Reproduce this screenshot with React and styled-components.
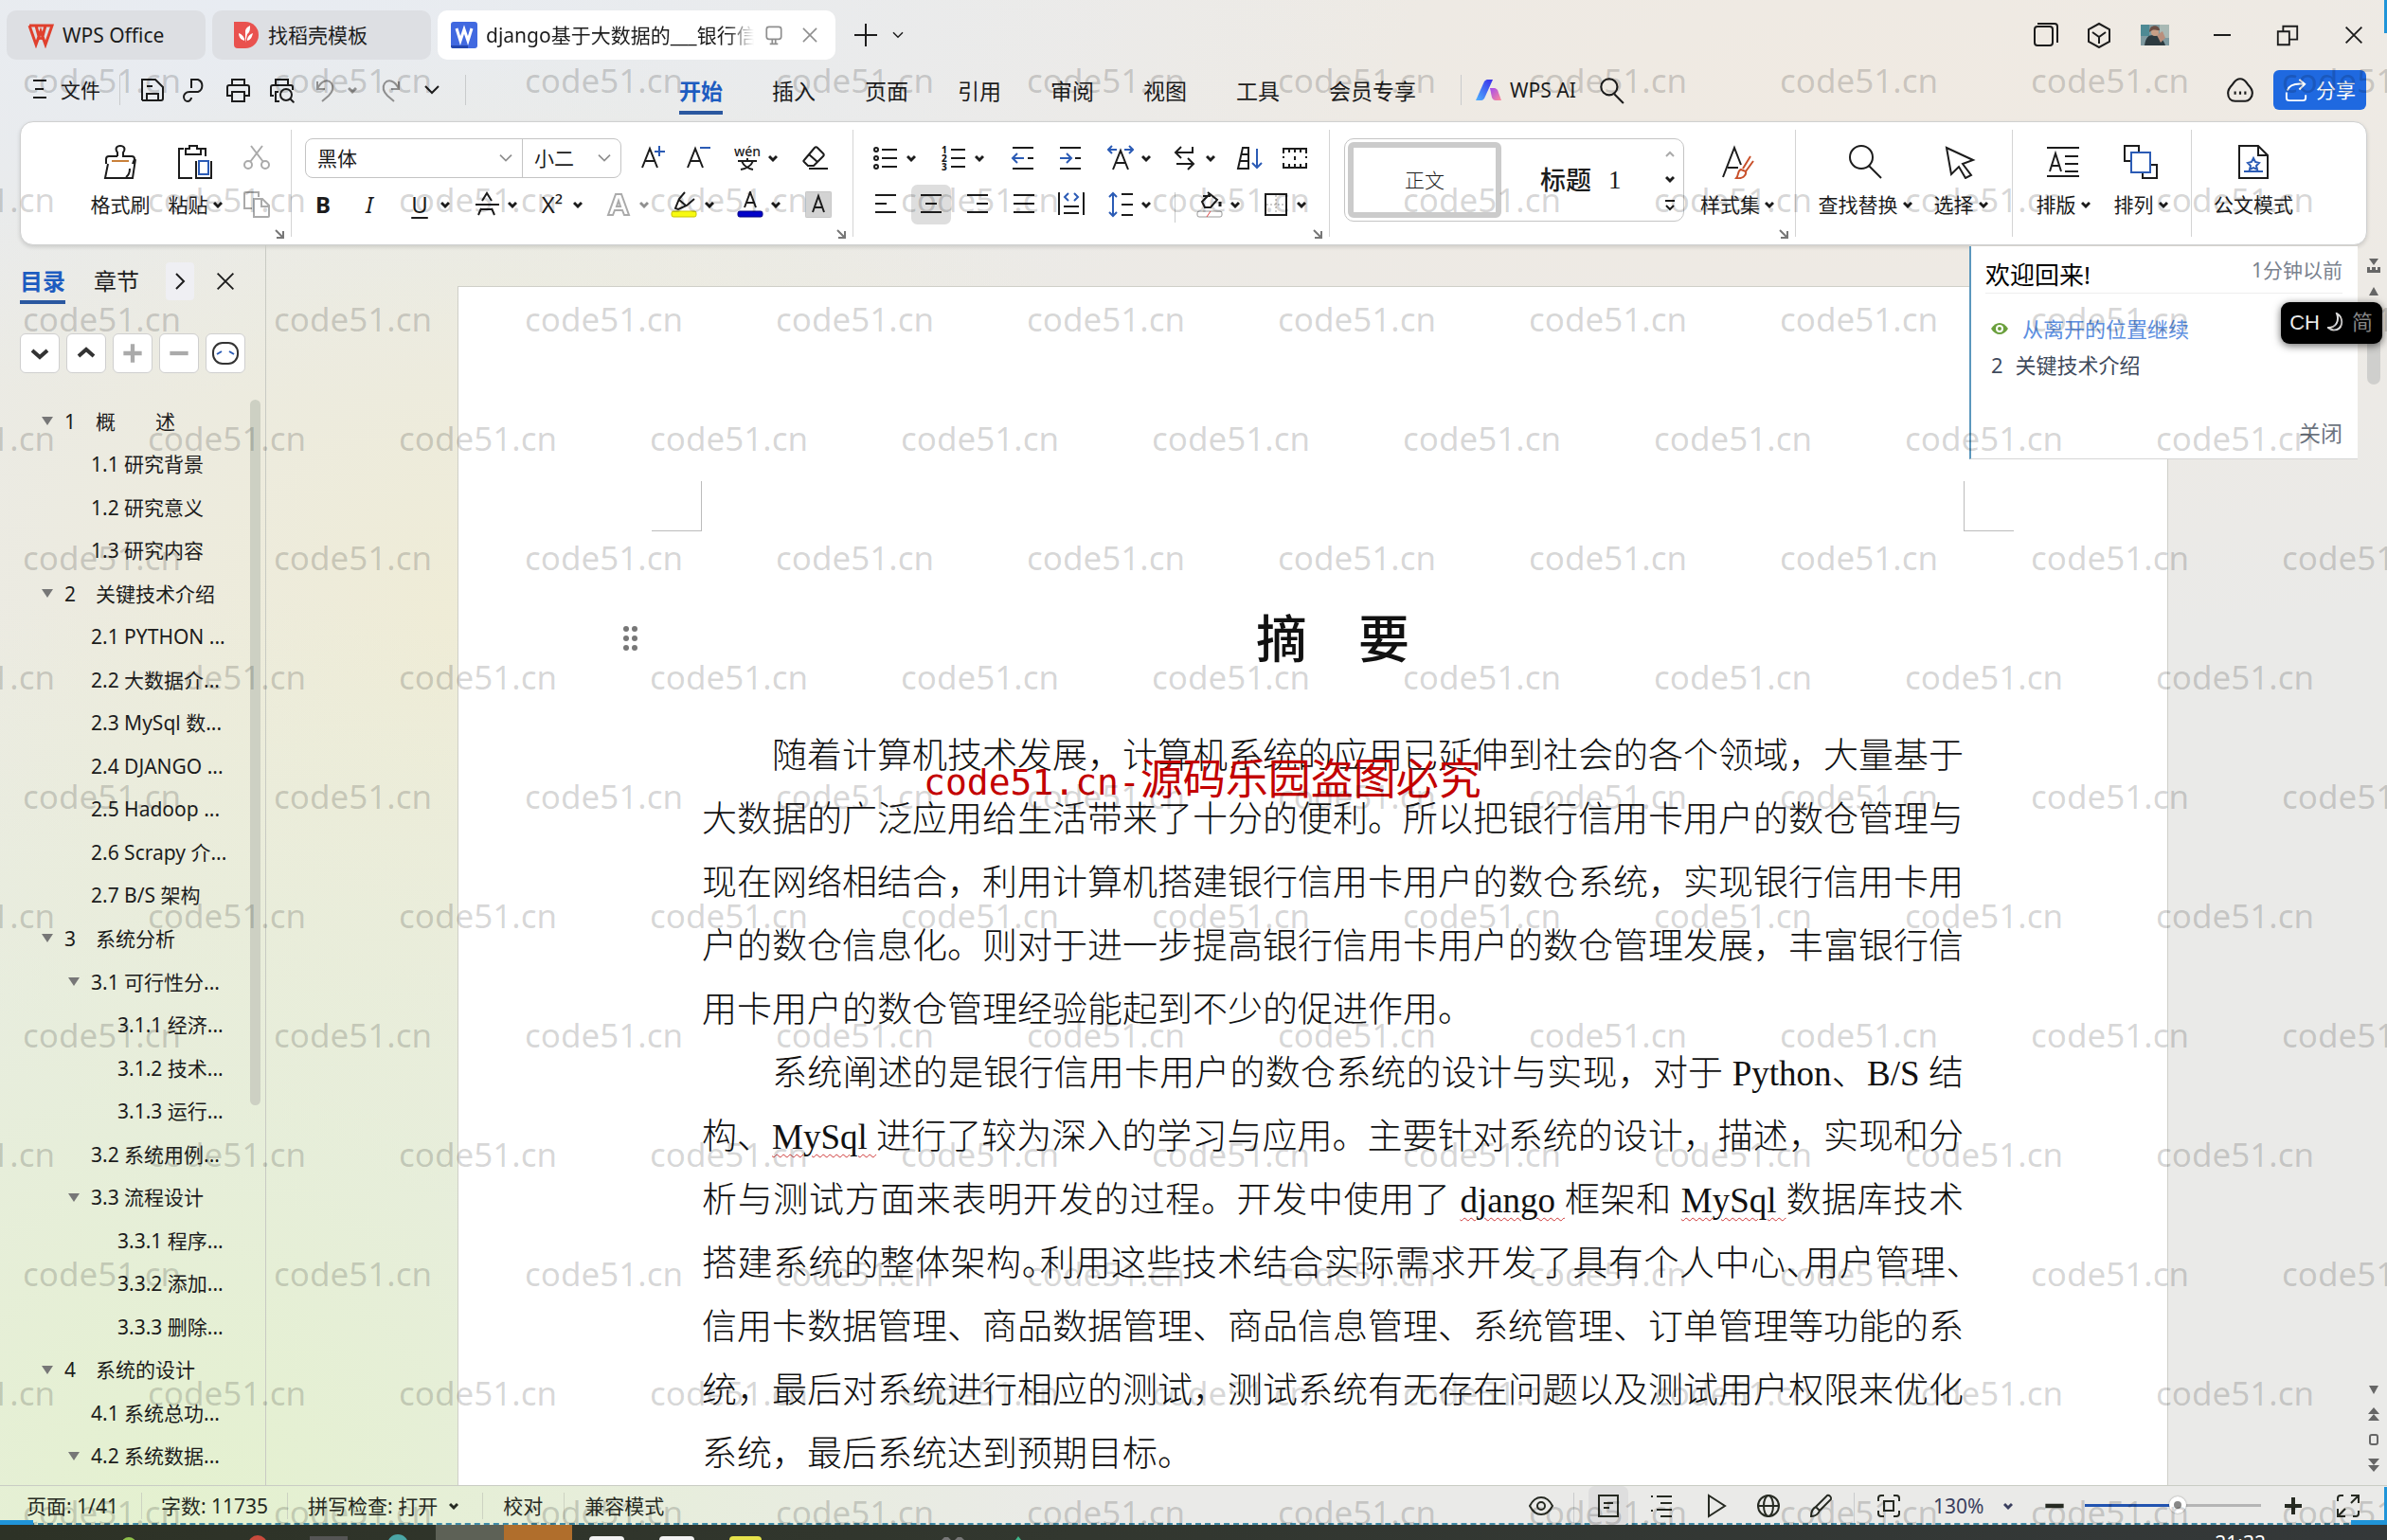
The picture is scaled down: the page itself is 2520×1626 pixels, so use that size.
import React, { useState } from 'react';
import styled, { createGlobalStyle } from 'styled-components';

const BLUE = '#2b5bb5';

const icons = {
  menu: <path d="M7 4h14M9 13h9M7 22h14" />,
  save: <path d="M3 25V3h14l8 8v12a2 2 0 0 1-2 2h-2M3 25h4M8 25v-7h12v7zM8 10h6" />,
  wpsP: <path d="M10 12V3h7a7 7 0 0 1 0 13h-9c-4 0-6 3-6 5 0 3 2 5 4 5s4-2 4-4" />,
  print: <path d="M8 9V3h13v6M8 20H3V11a2 2 0 0 1 2-2h19a2 2 0 0 1 2 2v9h-5M8 16h13v10H8z" />,
  preview: <><path d="M8 9V3h13v6M6 20H3V11a2 2 0 0 1 2-2h19a2 2 0 0 1 2 2v3M11 16H8v10h4" /><circle cx="19" cy="19" r="6" /><path d="M23 23l5 5" /></>,
  undo: <path d="M4 5v8h8M4 13C8 4 15 2 19 7c3 5 1 9-3 13l-7 6" />,
  redo: <path d="M24 5v8h-8M24 13C20 4 13 2 9 7c-3 5-1 9 3 13l7 6" />,
  down: <path d="M7 10l7 7 7-7" />,
  search: <><circle cx="12" cy="11" r="8" /><path d="M17 18l9 9" /></>,
  comment: <><path d="M14 3c5 0 6 4 8 6 3 3 4 5 4 8 0 5-4 8-7 8H9c-4 0-7-3-7-8 0-3 1-5 4-8 2-2 3-6 8-6z" /><path d="M8 17h2M13 17h2M18 17h2" strokeWidth="3" /></>,
  share: <path d="M3 16v6a3 3 0 0 0 3 3h15a3 3 0 0 0 3-3v-3M4 14c2-6 8-8 18-7M17 2l6 5-6 6" />,
  screen: <><rect x="5" y="4" width="18" height="15" rx="3" /><path d="M12 19v5M16 19v5M9 25h10" /></>,
  close: <path d="M5 5l18 18M23 5L5 23" />,
  plus: <path d="M14 2v24M2 14h24" />,
  minimize: <path d="M5 14h18" />,
  restore: <path d="M3 10h13v15H3zM9 10V4h16v15h-9" />,
  book: <><rect x="2" y="5" width="19" height="20" rx="3" /><path d="M5 2h18a3 3 0 0 1 3 3v17" /></>,
  cube: <path d="M14 2l11 6v13l-11 6-11-6V8zM7 11l7 5 7-5M14 16v7" />,
  scissors: <g stroke="#aaa"><circle cx="5" cy="21" r="4" /><circle cx="23" cy="21" r="4" /><path d="M7 18L20 1M21 18L8 1" /></g>,
  copy: <g stroke="#aaa"><path d="M9 18H1V1h15v5M11 8h9l7 7v12H11zM19 9v7h7" /></g>,
  wen: <><text x="0" y="12" fontSize="14" fontWeight="500" fill="currentColor" stroke="none">wén</text><path d="M4 17h20M14 14v3M8 17c2 5 7 8 12 9M20 17c-2 5-7 8-13 9" /></>,
  eraser: <path d="M3 16L14 3c1-1 2-1 3 0l6 6c1 1 1 2 0 3L13 22H7l-4-4c-1-1-1-1 0-2zM8 10l9 8M8 25h20" />,
  bullets: <><circle cx="4" cy="5" r="2" /><circle cx="4" cy="14" r="2" /><circle cx="4" cy="23" r="2" /><path d="M10 5h16M10 14h16M10 23h16" /></>,
  numbers: <><text x="1" y="9" fontSize="10" fontWeight="800" fill="currentColor" stroke="none">1</text><text x="1" y="18" fontSize="10" fontWeight="800" fill="currentColor" stroke="none">2</text><text x="1" y="27" fontSize="10" fontWeight="800" fill="currentColor" stroke="none">3</text><path d="M11 5h15M11 14h15M11 23h15" /></>,
  outdent: <><path d="M3 3h22M3 25h22M19 14h6" /><path d="M3 14h12M8 9l-5 5 5 5" stroke={BLUE} /></>,
  indent: <><path d="M3 3h22M3 25h22M19 14h6" /><path d="M3 14h12M10 9l5 5-5 5" stroke={BLUE} /></>,
  spacing: <><path d="M6 26l8-20 8 20M9 19h10" /><path d="M1 5h9M5 1L1 5l4 4M18 5h9M23 1l4 4-4 4" stroke={BLUE} /></>,
  wrap: <path d="M22 2v6H4M10 2L4 8l6 6M5 20h18M17 14l6 6-6 6" />,
  sort: <><path d="M2 25L7 3h6v22zM6 10h7M4 17h9" /><path d="M22 4v20M17 19l5 5 5-5" stroke={BLUE} /></>,
  tableLines: <path d="M2 9V4h24v5M8 4v4M14 4v4M20 4v4M2 19v5h24v-5M8 24v-4M14 24v-4M20 24v-4M14 12v4M2 12v2M26 12v2" />,
  left: <path d="M3 4h22M3 13h12M3 22h22" />,
  center: <path d="M3 4h22M8 13h12M3 22h22" />,
  right: <path d="M3 4h22M13 13h12M3 22h22" />,
  justify: <path d="M3 4h22M3 13h22M3 22h22" />,
  distribute: <><path d="M1 1v24M27 1v24M6 16h16M6 23h16" /><path d="M11 2L7 6l4 4M17 2l4 4-4 4" stroke={BLUE} /></>,
  lineHeight: <><path d="M15 3h12M15 14h12M15 25h12" /><path d="M6 2v24M2 6l4-4 4 4M2 22l4 4 4-4" stroke={BLUE} /></>,
  fill: <><path d="M12 1l10 8-7 8H9l-3-6 8-8M7 5h8" /><path d="M25 11v5" strokeWidth="3" /><rect x="1" y="21" width="26" height="6" rx="2" stroke="#999" strokeWidth="1" /><path d="M11 27l4-6" stroke="#d44" strokeWidth="1" /></>,
  border: <><rect x="3" y="3" width="22" height="22" /><path d="M14 4v20M4 14h20" stroke="#999" strokeWidth="1" strokeDasharray="2 2" /></>,
  highlight: <><path d="M15 1L9 8l-4 10 3 1 9-4 8-7M9 9l7 6" /><rect x="1" y="21" width="26" height="6" rx="2" fill="#f7fa10" stroke="#c9c500" strokeWidth="1" /></>,
  fontColor: <><path d="M8 17l6-16 6 16M10 12h8" /><rect x="1" y="21" width="26" height="6" rx="2" fill="#0303c9" stroke="#020280" strokeWidth="1" /></>,
  shadeA: <><rect x="0" y="0" width="28" height="28" fill="#d3d3d3" stroke="#bbb" strokeWidth="1" /><path d="M8 22l6-17 6 17M10 17h8" /></>,
  outlineA: <path d="M3 25L11 3h6l8 22h-5l-2-5h-8l-2 5zM12 16h4l-2-6z" stroke="#aaa" />,
  strikeA: <path d="M9 10l5-8 5 8M2 14h25M8 18l-3 7M19 18l3 7M8 19h12" />,
  eye: <><path d="M2 14c3-6 7-9 12-9s9 3 12 9c-3 6-7 9-12 9S5 20 2 14z" /><circle cx="14" cy="14" r="4" /></>,
  doc: <path d="M4 3h20v22H4zM9 11h10M9 16h6" />,
  outline: <path d="M3 4h2M3 19h2M9 4h16M13 11h12M9 18h16M13 25h12" />,
  play: <path d="M6 3l17 11L6 25z" />,
  globe: <><circle cx="14" cy="14" r="11" /><ellipse cx="14" cy="14" rx="5" ry="11" /><path d="M3 14h22" /></>,
  pen: <path d="M4 25c0-5 1-8 5-10l4 4c-2 5-5 6-9 6zM9 15L21 3c2-1 5 2 4 4L13 19" />,
  fit: <><path d="M3 9V6a3 3 0 0 1 3-3h3M19 3h3a3 3 0 0 1 3 3v3M25 19v3a3 3 0 0 1-3 3h-3M9 25H6a3 3 0 0 1-3-3v-3" /><rect x="9" y="9" width="10" height="10" /></>,
  expand: <path d="M3 9V6a3 3 0 0 1 3-3h3M25 19v3a3 3 0 0 1-3 3h-3M17 3h8v8M25 3l-8 8M3 17v8h8M3 25l8-8" />,
  bold: <path d="M5 14h18" strokeWidth="4" />,
  boldPlus: <path d="M14 5v18M5 14h18" strokeWidth="4" />,
};

const big = {
  brush: <><path d="M15 12V8c-3-4-1-7 3-7s6 3 3 7v4h9c2 0 3 1 3 3l-2 5M15 12H6c-2 0-3 1-3 3v5M5 20L2 35h29l3-20M24 34c3-2 4-5 4-9" /><path d="M9 17h18" stroke="#c9803a" /></>,
  paste: <><path d="M6 4H1v31h14M25 4h4v8M8 4h4V1h8v3h4v6H8zM19 17v18h16V17" /><path d="M22 17h10v14H22z" stroke={BLUE} /></>,
  styles: <><path d="M3 34L15 3l7 18M8 24h11" /><path d="M32 12L24 25M35 17l-8 11M22 26c-4 1-2 6-5 9 6 1 11-2 10-7z" stroke="#c8502a" /></>,
  find: <><circle cx="14" cy="13" r="12" /><path d="M22 22l13 13" /></>,
  cursor: <path d="M3 3l28 13-11 4 9 12-6 3-7-12-8 8z" />,
  typeset: <path d="M1 3h34M1 33h34M4 28l6-19 6 19M6 22h8M20 12h14M20 20h14M20 28h14" />,
  arrange: <><path d="M9 17H1V1h15v7M27 21h8v14H20v-6" /><path d="M8 8h20v21H8z" stroke={BLUE} /></>,
  official: <><path d="M3 1h20l10 10v24H3zM23 2v9h9" /><path d="M8 28h20M18 14l2 4 4 1-3 3 1 4-4-2-4 2 1-4-3-3 4-1z" stroke={BLUE} /></>,
};

const Icon = ({ name, size = 28 }) => (
  <Svg width={size} height={size} viewBox="0 0 28 28">{icons[name]}</Svg>
);

const BigIcon = ({ name }) => (
  <Svg width="36" height="36" viewBox="0 0 36 36">{big[name]}</Svg>
);

const Chevron = ({ light }) => (
  <Svg width="10" height="10" viewBox="0 0 10 10" $light={light}>
    <path d="M1 3l4 4 4-4" strokeWidth={light ? 1 : 3} />
  </Svg>
);

const ToolButton = ({ name, w, drop, active, label, children }) => (
  <Tool type="button" $w={w} $active={active} aria-label={label || name}>
    {children || <Icon name={name} />}
    {drop && <Chevron />}
  </Tool>
);

const BigButton = ({ icon, label, w, drop }) => (
  <BigTool type="button" $w={w}>
    <BigIcon name={icon} />
    <BigLabel>{label}{drop && <Chevron />}</BigLabel>
  </BigTool>
);

const Launcher = () => (
  <LaunchButton type="button" aria-label="more settings">
    <Svg width="10" height="10" viewBox="0 0 10 10"><path d="M1 1l7 7M9 2v7H2" /></Svg>
  </LaunchButton>
);

const menus = ['开始', '插入', '页面', '引用', '审阅', '视图', '工具', '会员专享'];

const outline = [
  { level: 0, open: true, text: '1\u3000概\u3000\u3000述' },
  { level: 1, text: '1.1 研究背景' },
  { level: 1, text: '1.2 研究意义' },
  { level: 1, text: '1.3 研究内容' },
  { level: 0, open: true, text: '2\u3000关键技术介绍' },
  { level: 1, text: '2.1 PYTHON ...' },
  { level: 1, text: '2.2 大数据介...' },
  { level: 1, text: '2.3 MySql 数...' },
  { level: 1, text: '2.4 DJANGO ...' },
  { level: 1, text: '2.5 Hadoop ...' },
  { level: 1, text: '2.6 Scrapy 介...' },
  { level: 1, text: '2.7 B/S 架构' },
  { level: 0, open: true, text: '3\u3000系统分析' },
  { level: 1, open: true, text: '3.1 可行性分...' },
  { level: 2, text: '3.1.1 经济...' },
  { level: 2, text: '3.1.2 技术...' },
  { level: 2, text: '3.1.3 运行...' },
  { level: 1, text: '3.2 系统用例...' },
  { level: 1, open: true, text: '3.3 流程设计' },
  { level: 2, text: '3.3.1 程序...' },
  { level: 2, text: '3.3.2 添加...' },
  { level: 2, text: '3.3.3 删除...' },
  { level: 0, open: true, text: '4\u3000系统的设计' },
  { level: 1, text: '4.1 系统总功...' },
  { level: 1, open: true, text: '4.2 系统数据...' },
];

const WatermarkLayer = () => (
  <Watermark aria-hidden="true">
    {Array.from({ length: 13 }, (_, row) => (
      <WatermarkRow key={row} $shift={row % 2 === 1}>
        {Array.from({ length: 10 }, (_, i) => <span key={i}>code51.cn</span>)}
      </WatermarkRow>
    ))}
  </Watermark>
);

const TitleBar = () => (
  <TabBar>
    <Tab type="button" $w={210} $pad={22}>
      <Svg width="28" height="28" viewBox="0 0 28 28">
        <path d="M2 4h7l4 15M2 4l7 20 5-14 5 14 7-20h-7l-4 15M9 4h10" stroke="#e0402e" strokeWidth="3" />
      </Svg>
      WPS Office
    </Tab>
    <Tab type="button" $w={231} $pad={22}>
      <Svg width="28" height="28" viewBox="0 0 28 28">
        <path d="M1 0h12a14 14 0 0 1 0 28H5a4 4 0 0 1-4-4z" fill="#e9524f" stroke="none" />
        <path d="M13 22V10c0-3 3-5 5-6 0 4 0 7-3 9M12 20c-4-1-6-4-6-8 3 1 5 3 6 6M15 20c4-1 5-4 6-8-3 1-5 3-6 6" fill="#fff" stroke="none" />
      </Svg>
      找稻壳模板
    </Tab>
    <Tab type="button" $w={420} $pad={14} $active>
      <Svg width="28" height="28" viewBox="0 0 28 28">
        <rect width="28" height="28" rx="3" fill="#4169e0" stroke="none" />
        <path d="M0 25h18v3H2a2 2 0 0 1-2-2z" fill="#2347b0" stroke="none" />
        <path d="M6 7l4 13 4-12 4 12 4-13" stroke="#fff" strokeWidth="3" />
      </Svg>
      <TabTitle>django基于大数据的___银行信</TabTitle>
      <Muted $mr={6}><Icon name="screen" size={24} /></Muted>
      <Muted><Icon name="close" size={22} /></Muted>
    </Tab>
    <PlainButton type="button" aria-label="new tab" $ml={11}><Icon name="plus" /></PlainButton>
    <PlainButton type="button" aria-label="tab list" $ml={10}><Icon name="down" size={20} /></PlainButton>
    <Spacer />
    <WindowControls>
      <PlainButton type="button" aria-label="reading"><Icon name="book" /></PlainButton>
      <PlainButton type="button" aria-label="apps" $ml={28}><Icon name="cube" /></PlainButton>
      <Avatar viewBox="0 0 30 22">
        <rect width="30" height="22" fill="#7f9aa0" />
        <path d="M0 0h9v12H0z" fill="#4e8a94" />
        <path d="M20 0h10v14H20z" fill="#a9b9b4" />
        <path d="M4 22c1-8 4-11 9-11s11 4 13 11z" fill="#2d3b40" />
        <path d="M17 11l6-4 3 7-5 5z" fill="#b98f7c" />
        <circle cx="15" cy="8" r="4" fill="#c79f86" />
        <path d="M9 8c0-9 11-8 11-2-4 0-6-1-8 0z" fill="#6a4f44" />
      </Avatar>
      <PlainButton type="button" aria-label="minimize" $ml={42}><Icon name="minimize" /></PlainButton>
      <PlainButton type="button" aria-label="restore" $ml={42}><Icon name="restore" size={26} /></PlainButton>
      <PlainButton type="button" aria-label="close" $ml={44}><Icon name="close" size={26} /></PlainButton>
    </WindowControls>
  </TabBar>
);

const MenuRow = () => {
  const [current, setCurrent] = useState('开始');
  return (
    <MenuBar>
      <QuickTools>
        <PlainButton type="button"><Icon name="menu" />文件</PlainButton>
        <MenuRule $l={20} $r={20} />
        <ToolButton name="save" w={45} />
        <ToolButton name="wpsP" w={45} />
        <ToolButton name="print" w={46} />
        <ToolButton name="preview" w={48} />
        <Muted><ToolButton name="undo" w={66} drop /></Muted>
        <Muted><ToolButton name="redo" w={45} /></Muted>
        <ToolButton name="down" w={49} />
        <MenuRule $l={0} $r={0} />
      </QuickTools>
      <MenuTabs>
        {menus.map((name) => (
          <MenuTab type="button" key={name} $active={name === current} onClick={() => setCurrent(name)}>
            {name}
          </MenuTab>
        ))}
      </MenuTabs>
      <MenuRule $l={0} $r={15} />
      <PlainButton type="button">
        <svg width="28" height="22" viewBox="0 0 28 22">
          <defs>
            <linearGradient id="aiBlue" x1="0" y1="1" x2="1" y2="0">
              <stop offset="0" stopColor="#4db2ff" /><stop offset="1" stopColor="#3a2be8" />
            </linearGradient>
            <linearGradient id="aiPink" x1="0" y1="0" x2="1" y2="1">
              <stop offset="0" stopColor="#a24bf0" /><stop offset="1" stopColor="#ff8a98" />
            </linearGradient>
          </defs>
          <path d="M9 2c1-1 2-2 3-2h6L9 20c-1 1-2 2-3 2H0z" fill="url(#aiBlue)" />
          <path d="M15 9h5c1 0 2 1 3 2l4 11h-6c-2 0-3-1-4-3z" fill="url(#aiPink)" />
        </svg>
        WPS AI
      </PlainButton>
      <PlainButton type="button" aria-label="search" $ml={22}><Icon name="search" size={30} /></PlainButton>
      <Spacer />
      <PlainButton type="button" aria-label="comments"><Icon name="comment" size={30} /></PlainButton>
      <ShareButton type="button"><Icon name="share" size={27} />分享</ShareButton>
    </MenuBar>
  );
};

const RibbonBar = () => (
  <Ribbon>
    <Group $pl={64} $pr={22}>
      <Columns>
        <BigButton icon="brush" label="格式刷" w={82} />
        <BigButton icon="paste" label="粘贴" w={76} drop />
        <Stack $ml={13}>
          <Row><ToolButton name="scissors" w={28} /></Row>
          <Row><ToolButton name="copy" w={28} /></Row>
        </Stack>
      </Columns>
      <Launcher />
    </Group>
    <Group $pl={14} $pr={22}>
      <Stack>
        <Row>
          <Combo>
            <ComboPart $w={228}>
              <select aria-label="font" defaultValue="黑体"><option>黑体</option><option>宋体</option></select>
              <Muted><Icon name="down" size={24} /></Muted>
            </ComboPart>
            <ComboPart $w={104}>
              <select aria-label="font size" defaultValue="小二"><option>小二</option><option>小四</option></select>
              <Muted><Icon name="down" size={24} /></Muted>
            </ComboPart>
          </Combo>
          <ToolButton w={48} label="grow font">
            <Svg width="28" height="28" viewBox="0 0 28 28"><path d="M1 24L9 4l8 20M4 17h10" /><path d="M19 1v11M14 7h11" stroke={BLUE} /></Svg>
          </ToolButton>
          <ToolButton w={50} label="shrink font">
            <Svg width="28" height="28" viewBox="0 0 28 28"><path d="M1 24L9 4l8 20M4 17h10" /><path d="M14 3h11" stroke={BLUE} /></Svg>
          </ToolButton>
          <ToolButton name="wen" w={71} drop />
          <ToolButton name="eraser" w={28} />
        </Row>
        <Row $pl={5}>
          <ToolButton w={49} label="bold"><Letter $bold>B</Letter></ToolButton>
          <ToolButton w={53} label="italic"><Letter $italic>I</Letter></ToolButton>
          <ToolButton w={71} label="underline" drop><Letter $under>U</Letter></ToolButton>
          <ToolButton name="strikeA" w={69} drop />
          <ToolButton w={70} label="superscript" drop><Letter>X²</Letter></ToolButton>
          <Muted><ToolButton name="outlineA" w={69} drop /></Muted>
          <ToolButton name="highlight" w={70} drop />
          <ToolButton name="fontColor" w={72} drop />
          <ToolButton name="shadeA" w={28} />
        </Row>
      </Stack>
      <Launcher />
    </Group>
    <Group $pl={20} $pr={20}>
      <Stack>
        <Row>
          <ToolButton name="bullets" w={72} drop />
          <ToolButton name="numbers" w={73} drop />
          <ToolButton name="outdent" w={50} />
          <ToolButton name="indent" w={53} />
          <ToolButton name="spacing" w={68} drop />
          <ToolButton name="wrap" w={68} drop />
          <ToolButton name="sort" w={48} />
          <ToolButton name="tableLines" w={30} />
        </Row>
        <Row>
          <ToolButton name="left" w={48} />
          <ToolButton name="center" w={49} active />
          <ToolButton name="right" w={49} />
          <ToolButton name="justify" w={50} />
          <ToolButton name="distribute" w={52} />
          <ToolButton name="lineHeight" w={71} drop />
          <MenuRule $l={0} $r={22} />
          <ToolButton name="fill" w={70} drop />
          <ToolButton name="border" w={50} drop />
        </Row>
      </Stack>
      <Launcher />
    </Group>
    <Group $pl={15} $pr={5}>
      <Columns>
        <Gallery>
          <StyleCard type="button">正文</StyleCard>
          <StyleHeading type="button">标题<span>1</span></StyleHeading>
          <GalleryArrows>
            <Svg width="10" height="10" viewBox="0 0 10 10" $light><path d="M1 7l4-4 4 4" /></Svg>
            <Chevron />
            <Svg width="10" height="14" viewBox="0 0 10 14"><path d="M0 2h10M1 7l4 4 4-4" /></Svg>
          </GalleryArrows>
        </Gallery>
        <BigButton icon="styles" label="样式集" w={112} drop />
      </Columns>
      <Launcher />
    </Group>
    <Group $pl={17} $pr={9}>
      <Columns>
        <BigButton icon="find" label="查找替换" w={112} drop />
        <BigButton icon="cursor" label="选择" w={90} drop />
      </Columns>
    </Group>
    <Group $pl={12} $pr={12}>
      <Columns>
        <BigButton icon="typeset" label="排版" w={82} drop />
        <BigButton icon="arrange" label="排列" w={82} drop />
      </Columns>
    </Group>
    <Group $last>
      <Columns>
        <BigButton icon="official" label="公文模式" w={130} />
      </Columns>
    </Group>
  </Ribbon>
);

const OutlinePanel = () => (
  <Sidebar>
    <PanelTabs>
      <PanelTab type="button" $active>目录</PanelTab>
      <PanelTab type="button">章节</PanelTab>
      <PanelMore type="button" aria-label="next">
        <Svg width="20" height="28" viewBox="0 0 20 28"><path d="M6 6l8 8-8 8" /></Svg>
      </PanelMore>
      <PlainButton type="button" aria-label="close panel"><Icon name="close" size={26} /></PlainButton>
    </PanelTabs>
    <PanelTools>
      <SquareButton type="button" aria-label="collapse"><Svg width="24" height="24" viewBox="0 0 24 24"><path d="M4 9l8 7 8-7" strokeWidth="4" /></Svg></SquareButton>
      <SquareButton type="button" aria-label="expand"><Svg width="24" height="24" viewBox="0 0 24 24"><path d="M4 15l8-7 8 7" strokeWidth="4" /></Svg></SquareButton>
      <SquareButton type="button" aria-label="add" $dim><Icon name="boldPlus" size={30} /></SquareButton>
      <SquareButton type="button" aria-label="remove" $dim><Icon name="bold" size={30} /></SquareButton>
      <SquareButton type="button" aria-label="assistant">
        <Svg width="30" height="28" viewBox="0 0 30 28">
          <rect x="2" y="3" width="26" height="22" rx="10" />
          <path d="M6 15l5-3M24 15l-5-3" stroke={BLUE} />
        </Svg>
      </SquareButton>
    </PanelTools>
    <TreeArea>
      <Tree>
        {outline.map((item) => (
          <TreeItem key={item.text} $level={item.level}>
            <TreeArrow>{item.open && <svg width="12" height="9"><path d="M0 0h12L6 9z" fill="#777" /></svg>}</TreeArrow>
            {item.text}
          </TreeItem>
        ))}
      </Tree>
      <TreeScroll />
    </TreeArea>
  </Sidebar>
);

const DocumentPage = () => (
  <Page>
    <CropMarks><CropMark $side="right" /><CropMark $side="left" /></CropMarks>
    <DocTitle>摘{'\u3000'}要</DocTitle>
    <DocBody>
      <Line $indent>随着计算机技术发展，计算机系统的应用已延伸到社会的各个领域，大量基于</Line>
      <Line>大数据的广泛应用给生活带来了十分的便利。所以把银行信用卡用户的数仓管理与</Line>
      <Line>现在网络相结合，利用计算机搭建银行信用卡用户的数仓系统，实现银行信用卡用</Line>
      <Line>户的数仓信息化。则对于进一步提高银行信用卡用户的数仓管理发展，丰富银行信</Line>
      <Line $end>用卡用户的数仓管理经验能起到不少的促进作用。</Line>
      <Line $indent>系统阐述的是银行信用卡用户的数仓系统的设计与实现，对于 <Latin>Python</Latin>、<Latin>B/S</Latin> 结</Line>
      <Line>构、<Latin $wavy>MySql </Latin>进行了较为深入的学习与应用。主要针对系统的设计，描述，实现和分</Line>
      <Line>析与测试方面来表明开发的过程。开发中使用了 <Latin $wavy>django </Latin>框架和 <Latin $wavy>MySql </Latin>数据库技术</Line>
      <Line>搭建系统的整体架构<Half>。</Half>利用这些技术结合实际需求开发了具有个人中心<Half>、</Half>用户管理<Half>、</Half></Line>
      <Line>信用卡数据管理、商品数据管理、商品信息管理、系统管理、订单管理等功能的系</Line>
      <Line>统，最后对系统进行相应的测试，测试系统有无存在问题以及测试用户权限来优化</Line>
      <Line $end>系统，最后系统达到预期目标。</Line>
    </DocBody>
    <Handle viewBox="0 0 16 28">
      {[4, 14, 24].map((y) => <g key={y}><circle cx="4" cy={y} r="3" /><circle cx="13" cy={y} r="3" /></g>)}
    </Handle>
    <RedMark><b>code51.cn-</b>源码乐园盗图必究</RedMark>
  </Page>
);

const WelcomeCard = () => (
  <Welcome>
    <WelcomeHead><h2>欢迎回来!</h2><span>1分钟以前</span></WelcomeHead>
    <WelcomeLine>
      <svg width="18" height="14" viewBox="0 0 18 14">
        <path d="M0 7c5-8 13-8 18 0-5 8-13 8-18 0z" fill="#6a9f3c" />
        <circle cx="9" cy="7" r="3" fill="#6a9f3c" stroke="#fff" strokeWidth="2" />
      </svg>
      <a href="#continue">从离开的位置继续</a>
    </WelcomeLine>
    <WelcomeLine $tight><span>2</span><span>关键技术介绍</span></WelcomeLine>
    <WelcomeClose type="button">关闭</WelcomeClose>
  </Welcome>
);

const VerticalScroll = () => (
  <ScrollStrip>
    <svg width="14" height="16" viewBox="0 0 14 16"><path d="M2 0h10L7 7zM0 9h3v3h2V9h4v3h2V9h3v6H0z" /></svg>
    <svg width="10" height="9" viewBox="0 0 10 9"><path d="M0 9h10L5 0z" /></svg>
    <ScrollThumb />
    <Spacer />
    <svg width="10" height="9" viewBox="0 0 10 9"><path d="M0 0h10L5 9z" /></svg>
    <svg width="12" height="14" viewBox="0 0 12 14"><path d="M0 7h12L6 0zM0 14h12L6 7z" /></svg>
    <svg width="12" height="12" viewBox="0 0 12 12"><rect x="2" y="1" width="8" height="10" rx="2" fill="none" stroke="#666" strokeWidth="2" /></svg>
    <svg width="12" height="14" viewBox="0 0 12 14"><path d="M0 0h12L6 7zM0 7h12l-6 7z" /></svg>
  </ScrollStrip>
);

const StatusRow = () => {
  const [zoom, setZoom] = useState(53);
  return (
    <StatusBar>
      <StatusItem $pr={24}>页面: 1/41</StatusItem>
      <StatusItem $pl={20} $pr={20}>字数: 11735</StatusItem>
      <StatusItem $pl={21} $pr={25}>拼写检查: 打开 <Chevron /></StatusItem>
      <StatusItem $pl={21} $pr={22}>校对</StatusItem>
      <StatusItem $pl={21} $last>兼容模式</StatusItem>
      <Spacer />
      <ToolButton name="eye" w={48} />
      <MenuRule $l={0} $r={22} />
      <ToolButton name="doc" w={56} active />
      <ToolButton name="outline" w={58} />
      <ToolButton name="play" w={55} />
      <ToolButton name="globe" w={55} />
      <ToolButton name="pen" w={49} />
      <MenuRule $l={0} $r={22} />
      <ToolButton name="fit" w={61} />
      <ZoomSelect>
        <select aria-label="zoom" defaultValue="130%"><option>130%</option><option>100%</option></select>
        <Chevron />
      </ZoomSelect>
      <ToolButton w={42} label="zoom out"><Icon name="bold" size={30} /></ToolButton>
      <Slider type="range" aria-label="zoom level" value={zoom} onChange={(e) => setZoom(e.target.value)} />
      <ToolButton w={58} label="zoom in"><Icon name="boldPlus" /></ToolButton>
      <ToolButton name="expand" w={28} />
    </StatusBar>
  );
};

const App = () => (
  <>
    <GlobalStyle />
    <Shell>
      <TitleBar />
      <MenuRow />
      <RibbonBar />
      <Workspace>
        <OutlinePanel />
        <Canvas><DocumentPage /></Canvas>
        <VerticalScroll />
        <WelcomeCard />
        <ImeBadge>
          CH
          <svg width="18" height="22" viewBox="0 0 18 22"><path d="M10 1c7 4 7 14 0 17-4 1-7 0-9-2 8 0 12-7 9-15z" fill="none" stroke="#ddd" strokeWidth="2" /></svg>
          <span>简</span>
        </ImeBadge>
      </Workspace>
      <StatusRow />
      <Taskbar>
        <TaskDots viewBox="0 0 460 16">
          <circle cx="136" cy="21" r="8" fill="#8fbf4a" />
          <circle cx="272" cy="21" r="10" fill="#c94a3c" />
          <rect x="327" y="12" width="40" height="8" fill="#555" />
          <circle cx="420" cy="21" r="11" fill="#4aa6a6" />
        </TaskDots>
        <TaskBlock $c="#5d6156" />
        <TaskBlock $c="#b06e2c" />
        <TaskDots viewBox="0 0 460 16">
          <rect x="18" y="12" width="37" height="12" rx="4" fill="#f2f2f2" />
          <rect x="92" y="12" width="37" height="12" rx="4" fill="#f2f2f2" />
          <rect x="166" y="12" width="34" height="12" rx="4" fill="#e6e24a" />
          <path d="M390 16l3-3h4l3 3M404 16l3-3h4l3 3" fill="#777" />
          <path d="M468 16l3-4 3 4" fill="#3fb58a" />
        </TaskDots>
        <Spacer />
        <Clock>21:32</Clock>
      </Taskbar>
      <WatermarkLayer />
      <Corner $pos="bottomLeft" />
      <Corner $pos="bottomRight" />
      <Corner $pos="rightLow" />
      <Corner $pos="topRight" />
    </Shell>
  </>
);

export default App;

const GlobalStyle = createGlobalStyle`
  * { box-sizing: border-box; }
  body {
    margin: 0;
    color: #1c1c1c;
    font: 21px/28px "Noto Sans", "Noto Sans CJK SC", sans-serif;
  }
  button, select, input {
    font: inherit;
    color: inherit;
    border: 0;
    padding: 0;
    background: none;
  }
`;

const Shell = styled.div`
  position: relative;
  display: flex;
  flex-direction: column;
  height: 100vh;
  overflow: hidden;
  background:
    radial-gradient(ellipse 38% 62% at 8% 100%, #e4f1cf, #e4f1cf00),
    radial-gradient(ellipse 30% 38% at 20% 40%, #efecd6, #efecd600),
    radial-gradient(ellipse 50% 26% at 10% 0%, #e8ecf2, #e8ecf200),
    radial-gradient(ellipse 60% 36% at 78% 6%, #f0eae2, #f0eae200),
    #eaeae8;
`;

const Svg = styled.svg`
  flex: none;
  display: block;
  fill: none;
  stroke: ${(p) => (p.$light ? '#aaa' : 'currentColor')};
  stroke-width: 2;
`;

const Spacer = styled.div`
  flex: 1;
`;

const Muted = styled.span`
  display: flex;
  margin-right: ${(p) => p.$mr || 0}px;
  color: #8f8f8f;
`;

const PlainButton = styled.button`
  display: flex;
  align-items: center;
  gap: 8px;
  height: 42px;
  margin-left: ${(p) => p.$ml || 0}px;
  white-space: nowrap;
`;

const TabBar = styled.header`
  display: flex;
  flex: none;
  align-items: center;
  height: 74px;
  padding: 0 22px 0 7px;
`;

const Tab = styled.button`
  display: flex;
  align-items: center;
  gap: 9px;
  width: ${(p) => p.$w}px;
  height: 52px;
  margin-right: 7px;
  padding: 0 ${(p) => (p.$active ? 16 : 0)}px 0 ${(p) => p.$pad}px;
  border-radius: 10px;
  background: ${(p) => (p.$active ? '#fff' : '#dddfe3')};
  white-space: nowrap;
`;

const TabTitle = styled.span`
  flex: 1;
  overflow: hidden;
  text-align: left;
  mask-image: linear-gradient(90deg, #000 90%, transparent);
`;

const WindowControls = styled.div`
  display: flex;
  align-items: center;
`;

const Avatar = styled.svg`
  width: 30px;
  height: 22px;
  margin-left: 30px;
`;

const MenuBar = styled.nav`
  display: flex;
  flex: none;
  align-items: flex-start;
  height: 54px;
  padding: 0 22px 0 28px;
`;

const QuickTools = styled.div`
  display: flex;
  width: 689px;
`;

const MenuRule = styled.i`
  width: 1px;
  height: 32px;
  margin: 5px ${(p) => p.$r}px 0 ${(p) => p.$l}px;
  background: #c9cbcc;
`;

const MenuTabs = styled.div`
  display: flex;
  gap: 52px;
  margin-right: 47px;
`;

const MenuTab = styled.button`
  height: 47px;
  border-bottom: 4px solid ${(p) => (p.$active ? '#2b58a0' : 'transparent')};
  color: ${(p) => (p.$active ? '#1d5cc0' : '#1c1c1c')};
  font-size: 23px;
  font-weight: ${(p) => (p.$active ? 700 : 400)};
  line-height: 42px;
  white-space: nowrap;
`;

const ShareButton = styled.button`
  display: flex;
  align-items: center;
  justify-content: center;
  gap: 7px;
  width: 98px;
  height: 42px;
  margin-left: 20px;
  border-radius: 6px;
  background: #1f69e0;
  color: #fff;
`;

const Ribbon = styled.section`
  display: flex;
  flex: none;
  height: 131px;
  margin: 0 21px;
  padding: 8px 0;
  border: 1px solid #cfd0d0;
  border-radius: 14px;
  background: #fff;
  box-shadow: 0 2px 4px #0002;
`;

const Group = styled.div`
  --right: ${(p) => p.$pr || 0}px;
  display: flex;
  flex: none;
  flex-direction: column;
  padding: 9px var(--right) 0 ${(p) => p.$pl || 0}px;
  border-right: ${(p) => (p.$last ? 'none' : '1px solid #d4d4d4')};
`;

const Columns = styled.div`
  display: flex;
`;

const Stack = styled.div`
  display: flex;
  flex-direction: column;
  gap: 7px;
  margin-left: ${(p) => p.$ml || 0}px;
`;

const Row = styled.div`
  display: flex;
  align-items: center;
  height: 42px;
  padding-left: ${(p) => p.$pl || 0}px;
`;

const Tool = styled.button`
  display: flex;
  flex: none;
  align-items: center;
  gap: 8px;
  width: ${(p) => p.$w}px;
  height: 42px;

  > svg:first-child {
    border-radius: 2px;
    background: ${(p) => (p.$active ? '#dedede' : 'none')};
    box-shadow: ${(p) => (p.$active ? '0 0 0 7px #dedede' : 'none')};
  }
`;

const BigTool = styled.button`
  display: flex;
  flex-direction: column;
  align-items: center;
  gap: 6px;
  width: ${(p) => p.$w}px;
  padding-top: 7px;
`;

const BigLabel = styled.span`
  display: flex;
  align-items: center;
  gap: 5px;
  line-height: 42px;
  white-space: nowrap;
`;

const LaunchButton = styled.button`
  align-self: flex-end;
  height: 10px;
  margin: 5px calc(7px - var(--right)) 0 0;
  color: #777;
`;

const Letter = styled.span`
  width: 28px;
  text-align: center;
  font-size: 24px;
  font-weight: ${(p) => (p.$bold ? 700 : 400)};
  font-style: ${(p) => (p.$italic ? 'italic' : 'normal')};
  text-decoration: ${(p) => (p.$under ? 'underline' : 'none')};
  text-underline-offset: 4px;
`;

const Combo = styled.div`
  display: flex;
  height: 42px;
  margin-right: 21px;
  border: 1px solid #c4c4c4;
  border-radius: 8px;
`;

const ComboPart = styled.label`
  display: flex;
  align-items: center;
  width: ${(p) => p.$w}px;
  padding: 0 5px 0 12px;

  & + & {
    border-left: 1px solid #c4c4c4;
  }

  select {
    flex: 1;
    min-width: 0;
    height: 38px;
    appearance: none;
  }
`;

const Gallery = styled.div`
  display: flex;
  width: 359px;
  height: 88px;
  padding: 3px;
  border: 1px solid #c4c4c4;
  border-radius: 10px;
`;

const StyleCard = styled.button`
  width: 162px;
  height: 80px;
  border: 6px solid #cbcbcb;
  border-radius: 6px;
  font-weight: 300;
`;

const StyleHeading = styled.button`
  display: flex;
  flex: 1;
  align-items: center;
  gap: 18px;
  padding-left: 41px;
  font-size: 27px;
  font-weight: 500;

  span {
    font-family: "Liberation Serif", serif;
  }
`;

const GalleryArrows = styled.div`
  display: flex;
  flex-direction: column;
  align-items: center;
  justify-content: space-between;
  padding: 8px 6px 6px 0;
`;

const Workspace = styled.main`
  position: relative;
  display: flex;
  flex: 1;
  min-height: 0;
`;

const Sidebar = styled.aside`
  display: flex;
  flex: none;
  flex-direction: column;
  width: 281px;
  padding: 14px 0 0 21px;
  border-right: 1px solid #c8cac3;
`;

const PanelTabs = styled.div`
  display: flex;
  align-items: center;
  height: 48px;
`;

const PanelTab = styled.button`
  height: 48px;
  margin-right: 30px;
  padding-top: 4px;
  border-bottom: 4px solid ${(p) => (p.$active ? '#2b58a0' : 'transparent')};
  color: ${(p) => (p.$active ? '#1d5cc0' : '#1c1c1c')};
  font-size: 24px;
  font-weight: ${(p) => (p.$active ? 700 : 400)};
  white-space: nowrap;
`;

const PanelMore = styled.button`
  display: flex;
  align-items: center;
  justify-content: center;
  width: 30px;
  height: 40px;
  margin: 0 20px 0 -2px;
  border-radius: 4px;
  background: #efeff3;
`;

const PanelTools = styled.div`
  display: flex;
  gap: 7px;
  margin-top: 31px;
`;

const SquareButton = styled.button`
  display: flex;
  align-items: center;
  justify-content: center;
  width: 42px;
  height: 42px;
  border: 1px solid #cfcfcf;
  border-radius: 6px;
  background: #fff;
  color: ${(p) => (p.$dim ? '#aaa' : '#333')};
`;

const TreeArea = styled.div`
  display: flex;
  flex: 1;
  min-height: 0;
  padding-top: 28px;
`;

const Tree = styled.ul`
  display: grid;
  flex: 1;
  grid-auto-rows: 1fr;
  margin: 0;
  padding: 0 0 8px;
  list-style: none;
`;

const TreeItem = styled.li`
  display: flex;
  align-items: center;
  padding-left: ${(p) => 23 + p.$level * 28}px;
  white-space: pre;
`;

const TreeArrow = styled.span`
  display: flex;
  width: 24px;
`;

const TreeScroll = styled.div`
  width: 11px;
  height: 65%;
  margin-right: 5px;
  border-radius: 6px;
  background: #cdd0c3;
`;

const Canvas = styled.div`
  display: flex;
  flex: 1;
  justify-content: center;
  min-width: 0;
  padding: 43px 1px 0 0;
  overflow: hidden;
`;

const Page = styled.article`
  position: relative;
  width: 1806px;
  padding: 205px 215px 0 257px;
  border: 1px solid #cfcfc8;
  border-bottom: 0;
  background: #fff;
  color: #111;
`;

const CropMarks = styled.div`
  display: flex;
  justify-content: space-between;
  margin: 0 -53px;
`;

const CropMark = styled.i`
  width: 53px;
  height: 53px;
  border-bottom: 1px solid #bbb;
  border-${(p) => p.$side}: 1px solid #bbb;
`;

const DocTitle = styled.h1`
  margin: 73px 0 0;
  font-size: 54px;
  font-weight: 500;
  line-height: 80px;
  text-align: center;
`;

const DocBody = styled.div`
  margin-top: 51px;
  font-family: "Liberation Serif", "Noto Sans CJK SC", serif;
  font-size: 37px;
  font-weight: 300;
  line-height: 67px;
`;

const Line = styled.p`
  margin: 0;
  padding-left: ${(p) => (p.$indent ? 74 : 0)}px;
  text-align-last: ${(p) => (p.$end ? 'left' : 'justify')};
  white-space: nowrap;
`;

const Latin = styled.span`
  text-decoration: ${(p) => (p.$wavy ? 'underline wavy #c33 1px' : 'none')};
  text-underline-offset: 5px;
`;

const Half = styled.span`
  font-feature-settings: "halt";
`;

const Handle = styled.svg`
  position: absolute;
  top: 357px;
  left: 173px;
  width: 16px;
  height: 28px;
  fill: #777;
`;

const RedMark = styled.div`
  position: absolute;
  top: 487px;
  left: 491px;
  color: #c30000;
  font-size: 45px;
  line-height: 64px;
  white-space: nowrap;

  b {
    font-family: "DejaVu Sans Mono", monospace;
    font-size: 38px;
    font-weight: 400;
  }
`;

const Welcome = styled.section`
  position: absolute;
  top: 1px;
  right: 31px;
  display: flex;
  flex-direction: column;
  width: 410px;
  height: 225px;
  padding: 8px 16px 9px 15px;
  border-bottom: 1px solid #d5d5d5;
  border-left: 2px solid #5b97bd;
  background: #fff;
`;

const WelcomeHead = styled.div`
  display: flex;
  justify-content: space-between;
  height: 42px;
  border-bottom: 1px solid #eee;
  color: #7a828e;
  line-height: 35px;

  h2 {
    margin: 0;
    color: #000;
    font-size: 26px;
    font-weight: 400;
    line-height: 45px;
  }
`;

const WelcomeLine = styled.div`
  display: flex;
  align-items: center;
  gap: ${(p) => (p.$tight ? 13 : 15)}px;
  height: 38px;
  margin-top: ${(p) => (p.$tight ? 0 : 18)}px;
  padding-left: 6px;
  color: #3f4a5c;
  font-size: 22px;

  a {
    color: #5d8fe0;
    text-decoration: none;
  }
`;

const WelcomeClose = styled.button`
  align-self: flex-end;
  margin-top: auto;
  color: #6c7480;
  font-size: 23px;
  line-height: 36px;
`;

const ImeBadge = styled.div`
  position: absolute;
  top: 60px;
  right: 5px;
  display: flex;
  align-items: center;
  gap: 8px;
  padding: 0 10px 0 9px;
  border-radius: 9px;
  background: #000;
  box-shadow: 0 2px 8px #0009;
  color: #eee;
  font-family: "Liberation Sans", "Noto Sans CJK SC", sans-serif;
  font-size: 22px;
  line-height: 44px;

  span {
    color: #888;
  }
`;

const ScrollStrip = styled.div`
  display: flex;
  flex: none;
  flex-direction: column;
  align-items: center;
  gap: 14px;
  width: 28px;
  padding: 14px 0 14px;
  fill: #666;
`;

const ScrollThumb = styled.div`
  width: 14px;
  height: 80px;
  border-radius: 7px;
  background: #cfcfcd;
`;

const StatusBar = styled.footer`
  display: flex;
  flex: none;
  align-items: center;
  height: 42px;
  padding: 2px 27px 0 28px;
  border-top: 1px solid #c9ccc4;
  border-bottom: 2px dashed #3e8ba8;
  color: #262a22;
`;

const StatusItem = styled.span`
  display: flex;
  align-items: center;
  gap: 12px;
  padding: 0 ${(p) => p.$pr || 0}px 0 ${(p) => p.$pl || 0}px;
  border-right: ${(p) => (p.$last ? 'none' : '1px solid #cdd3c2')};
  white-space: nowrap;
`;

const ZoomSelect = styled.label`
  display: flex;
  align-items: center;
  margin-right: 29px;
  color: #3a3f5e;

  select {
    width: 74px;
    height: 36px;
    appearance: none;
  }
`;

const Slider = styled.input`
  width: 186px;
  height: 20px;
  margin: 0 20px 0 5px;
  appearance: none;

  &::-webkit-slider-runnable-track {
    height: 3px;
    background: linear-gradient(90deg, #2254b0 53%, #b5b5b5 53%);
  }

  &::-webkit-slider-thumb {
    width: 18px;
    height: 18px;
    margin-top: -8px;
    border: 5px solid #fff;
    border-radius: 9px;
    appearance: none;
    background: #888;
    box-shadow: 0 0 2px #0006;
  }
`;

const Taskbar = styled.div`
  display: flex;
  flex: none;
  height: 16px;
  overflow: hidden;
  background: linear-gradient(90deg, #2d3226, #32372f 45%, #343839);
`;

const TaskDots = styled.svg`
  flex: none;
  width: 460px;
  height: 16px;
  overflow: visible;
`;

const TaskBlock = styled.div`
  width: 72px;
  background: ${(p) => p.$c};
`;

const Clock = styled.time`
  margin-right: 128px;
  padding-top: 5px;
  color: #fff;
`;

const Watermark = styled.div`
  position: absolute;
  inset: 0;
  overflow: hidden;
  padding-top: 22px;
  color: rgba(0, 0, 0, 0.17);
  font-size: 35px;
  line-height: 126px;
  pointer-events: none;
`;

const WatermarkRow = styled.div`
  display: flex;
  margin-left: ${(p) => (p.$shift ? -109 : 24)}px;

  span {
    flex: none;
    width: 265px;
  }
`;

const corners = {
  bottomLeft: 'left: 0; bottom: 16px; width: 35px; height: 5px;',
  bottomRight: 'right: 0; bottom: 16px; width: 38px; height: 5px;',
  rightLow: 'right: 0; bottom: 16px; width: 3px; height: 40px;',
  topRight: 'right: 0; top: 0; width: 3px; height: 35px;',
};

const Corner = styled.i`
  position: absolute;
  background: #2094d8;
  ${(p) => corners[p.$pos]}
`;
